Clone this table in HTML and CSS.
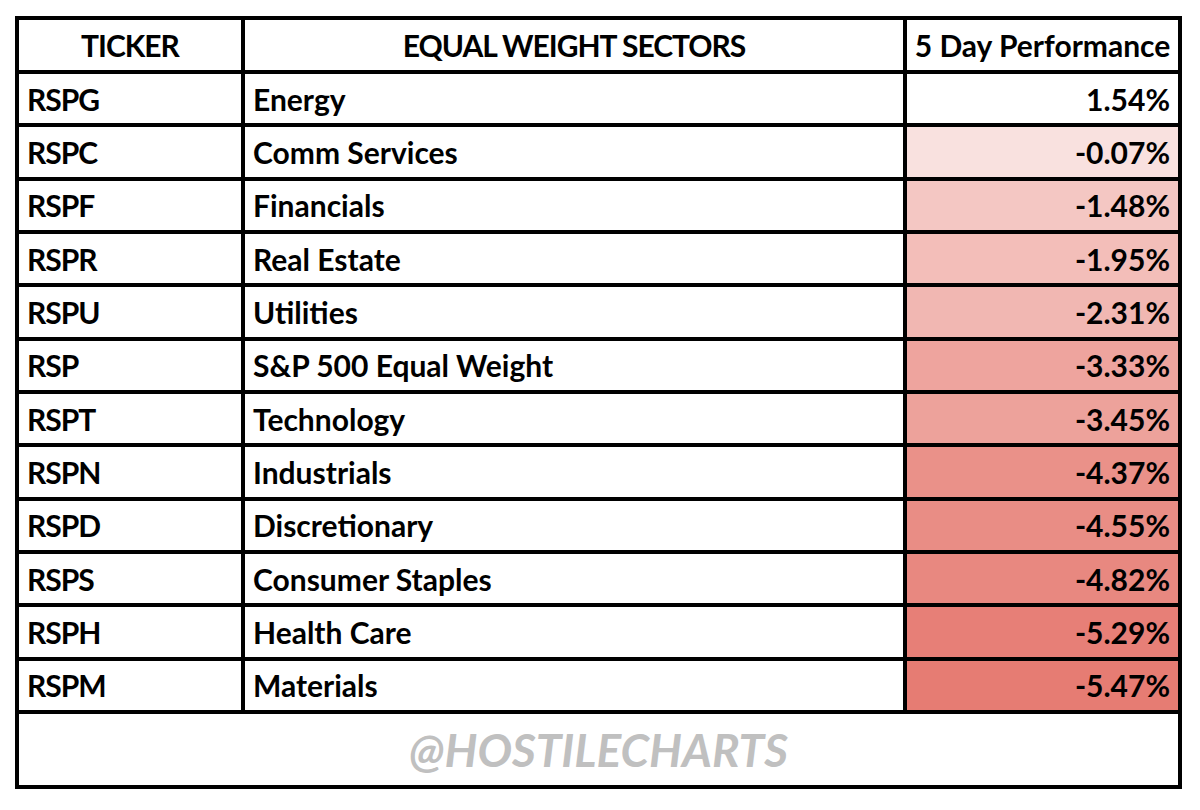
FILE: index.html
```html
<!DOCTYPE html>
<html>
<head>
<meta charset="utf-8">
<link rel="stylesheet" href="styles.css">
</head>
<body>
<div class="sheet">
  <div class="cell head caps">TICKER</div>
  <div class="cell head caps">EQUAL WEIGHT SECTORS</div>
  <div class="cell head">5 Day Performance</div>

  <div class="cell caps">RSPG</div><div class="cell">Energy</div><div class="cell num" style="background:rgb(255,255,255)">1.54%</div>
  <div class="cell caps">RSPC</div><div class="cell">Comm Services</div><div class="cell num" style="background:rgb(249,225,223)">-0.07%</div>
  <div class="cell caps">RSPF</div><div class="cell">Financials</div><div class="cell num" style="background:rgb(244,199,195)">-1.48%</div>
  <div class="cell caps">RSPR</div><div class="cell">Real Estate</div><div class="cell num" style="background:rgb(243,190,185)">-1.95%</div>
  <div class="cell caps">RSPU</div><div class="cell">Utilities</div><div class="cell num" style="background:rgb(241,183,178)">-2.31%</div>
  <div class="cell caps">RSP</div><div class="cell">S&amp;P 500 Equal Weight</div><div class="cell num" style="background:rgb(238,164,158)">-3.33%</div>
  <div class="cell caps">RSPT</div><div class="cell">Technology</div><div class="cell num" style="background:rgb(237,162,155)">-3.45%</div>
  <div class="cell caps">RSPN</div><div class="cell">Industrials</div><div class="cell num" style="background:rgb(234,145,137)">-4.37%</div>
  <div class="cell caps">RSPD</div><div class="cell">Discretionary</div><div class="cell num" style="background:rgb(233,141,133)">-4.55%</div>
  <div class="cell caps">RSPS</div><div class="cell">Consumer Staples</div><div class="cell num" style="background:rgb(232,136,128)">-4.82%</div>
  <div class="cell caps">RSPH</div><div class="cell">Health Care</div><div class="cell num" style="background:rgb(231,127,119)">-5.29%</div>
  <div class="cell caps">RSPM</div><div class="cell">Materials</div><div class="cell num" style="background:rgb(230,124,115)">-5.47%</div>

  <div class="cell footer">@HOSTILECHARTS</div>
</div>
</body>
</html>
```

FILE: styles.css
```css
html, body {
  margin: 0;
  padding: 0;
  background: #ffffff;
}

body {
  padding: 16px 0 0 15px;
  font-family: Lato, "Liberation Sans", sans-serif;
}

.sheet {
  width: 1167px;
  height: 773px;
  box-sizing: border-box;
  display: grid;
  grid-template-columns: 222px 658px 271px;
  grid-template-rows: 50px repeat(12, 49.333px) 71px;
  gap: 4px;
  padding: 4px;
  background: #000000;
}

.cell {
  background: #ffffff;
  display: flex;
  align-items: center;
  padding: 0 8px;
  font-weight: 700;
  font-size: 30px;
  color: #000000;
  white-space: nowrap;
  overflow: hidden;
}

.caps {
  letter-spacing: -1px;
}

.head {
  justify-content: center;
  padding: 0 2px;
}

.num {
  justify-content: flex-end;
}

.footer {
  grid-column: 1 / -1;
  justify-content: center;
  font-style: italic;
  font-size: 46px;
  color: #c0c0c0;
  letter-spacing: 0;
}
```
